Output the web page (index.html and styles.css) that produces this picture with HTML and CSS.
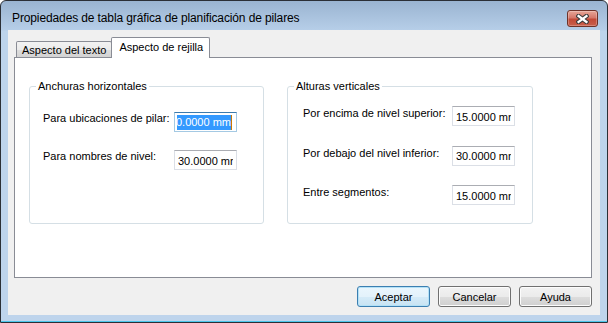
FILE: index.html
```html
<!DOCTYPE html>
<html lang="es">
<head>
  <meta charset="UTF-8">
  <title>Propiedades de tabla gráfica de planificación de pilares</title>
  <link rel="stylesheet" href="styles.css">
</head>
<body>

  <div class="window">
    <div class="titlebar">
      <span class="title">Propiedades de tabla gráfica de planificación de pilares</span>
      <button class="close" title="Cerrar">
        <svg width="13" height="10" viewBox="0 0 13 10">
          <path d="M2.5 2 L10.5 8 M10.5 2 L2.5 8" stroke="#3d3d3d" stroke-width="4.4" stroke-linecap="square"/>
          <path d="M2.5 2 L10.5 8 M10.5 2 L2.5 8" stroke="#ffffff" stroke-width="2.2" stroke-linecap="square"/>
        </svg>
      </button>
    </div>

    <div class="client">
      <div class="tabs">
        <div class="tab">Aspecto del texto</div>
        <div class="tab active">Aspecto de rejilla</div>
      </div>

      <div class="panel">
        <fieldset class="group group-h">
          <legend>Anchuras horizontales</legend>
          <div class="rows">
            <label>Para ubicaciones de pilar:</label>
            <div class="field focus"><div class="clip"><span class="sel">30.0000 mm</span></div></div>

            <label>Para nombres de nivel:</label>
            <input class="field" type="text" value="30.0000 mm">
          </div>
        </fieldset>

        <fieldset class="group group-v">
          <legend>Alturas verticales</legend>
          <div class="rows">
            <label>Por encima de nivel superior:</label>
            <input class="field" type="text" value="15.0000 mm">

            <label>Por debajo del nivel inferior:</label>
            <input class="field" type="text" value="30.0000 mm">

            <label>Entre segmentos:</label>
            <input class="field" type="text" value="15.0000 mm">
          </div>
        </fieldset>
      </div>

      <div class="buttons">
        <button class="btn default">Aceptar</button>
        <button class="btn">Cancelar</button>
        <button class="btn">Ayuda</button>
      </div>
    </div>
  </div>

</body>
</html>
```
FILE: styles.css
```css
body {
  margin: 0;
  background: #ffffff;
  font-family: "Liberation Sans", Arial, sans-serif;
  font-size: 11px;
  color: #000000;
}

.window {
  width: 608px;
  height: 323px;
  box-sizing: border-box;
  border: 1px solid #2b2f36;
  border-radius: 6px 6px 0 0;
  background: linear-gradient(#9ab4d1, #b6cee8 29px, #bdd4ec 30px, #bed4ec);
  box-shadow: inset 0 -1px 0 #4cc6ea;
  display: flex;
  flex-direction: column;
}

/* barra de titulo */
.titlebar {
  height: 29px;
  display: flex;
  align-items: flex-start;
  justify-content: space-between;
}

.title {
  padding: 9px 0 0 11px;
  font-size: 12px;
  line-height: 16px;
  letter-spacing: -0.12px;
  white-space: nowrap;
}

.close {
  width: 31px;
  height: 17px;
  margin: 9px 9px 0 0;
  padding: 0;
  border: 1px solid #6e3329;
  border-radius: 3px;
  background: linear-gradient(#e6a697, #d5786a 45%, #c24a37 55%, #c9604c);
  box-shadow: inset 0 0 0 1px rgba(255,255,255,0.25);
  display: flex;
  align-items: center;
  justify-content: center;
}

/* area cliente */
.client {
  height: 285px;
  margin: 0 7px;
  box-sizing: border-box;
  padding: 7px 8px 8px 6px;
  background: #f0f0f0;
  display: flex;
  flex-direction: column;
}

.tabs {
  display: flex;
  align-items: flex-end;
  padding-left: 2px;
  height: 20px;
}

.tab {
  height: 16px;
  box-sizing: border-box;
  padding: 1px 5px 0;
  line-height: 14px;
  border: 1px solid #898c95;
  border-bottom: none;
  border-radius: 2px 2px 0 0;
  background: linear-gradient(#f2f2f2, #ebebeb 50%, #dddddd 51%, #d3d3d3);
  white-space: nowrap;
}

.tab.active {
  height: 21px;
  margin-left: -1px;
  margin-bottom: -1px;
  padding: 2px 6px 0 7px;
  background: #ffffff;
  position: relative;
  z-index: 1;
}

.panel {
  height: 221px;
  box-sizing: border-box;
  border: 1px solid #898c95;
  background: #ffffff;
  padding: 21px 0 0 14px;
  display: flex;
  align-items: flex-start;
}

.group {
  margin: 0;
  padding: 0;
  height: 145px;
  box-sizing: border-box;
  border: 1px solid #d5dfe5;
  border-radius: 3px;
  min-inline-size: 0;
}

.group legend {
  margin-left: 6px;
  padding: 0 2px;
  line-height: 14px;
}

.group-h {
  width: 235px;
}

.group-v {
  width: 246px;
  margin-left: 23px;
}

.rows {
  display: grid;
  grid-auto-rows: 20px;
}

.group-h .rows {
  grid-template-columns: 131px 63px;
  row-gap: 18px;
  padding: 19px 0 0 13px;
}

.group-v .rows {
  grid-template-columns: 149px 63px;
  row-gap: 19.5px;
  padding: 13px 0 0 15px;
}

.rows label {
  line-height: 14px;
  white-space: nowrap;
}

.group-h .rows label {
  margin-top: -1px;
}

.field {
  width: 63px;
  height: 20px;
  box-sizing: border-box;
  margin: 0;
  padding: 1px 3px 0;
  border: 1px solid #dbdfe6;
  border-top-color: #abadb3;
  background: #ffffff;
  font-family: "Liberation Sans", Arial, sans-serif;
  font-size: 11px;
  color: #000000;
  outline: none;
}

.field.focus {
  border-color: #a4c9e3;
  border-top-color: #3d7bad;
  padding: 2px 4px 0 1px;
}

.clip {
  height: 15px;
  overflow: hidden;
  display: flex;
  justify-content: flex-end;
  margin-left: 1px;
}

.sel {
  background: #3399ff;
  color: #ffffff;
  line-height: 15px;
  white-space: nowrap;
  border-right: 1px solid #cc7a00;
}

/* botones */
.buttons {
  display: flex;
  justify-content: flex-end;
  gap: 8px;
  margin-top: 8px;
}

.btn {
  width: 73px;
  height: 21px;
  padding: 0;
  border: 1px solid #707070;
  border-radius: 3px;
  background: linear-gradient(#f2f2f2, #ebebeb 50%, #dddddd 51%, #cfcfcf);
  box-shadow: inset 0 0 0 1px #fcfcfc;
  font-family: "Liberation Sans", Arial, sans-serif;
  font-size: 11px;
  color: #000000;
}

.btn.default {
  border-color: #3c7fb1;
  box-shadow: inset 0 0 0 1px #b3e1f7;
  background: linear-gradient(#eaf6fd, #e3f2fb 50%, #d5ebf8 51%, #c8e3f3);
}
```
